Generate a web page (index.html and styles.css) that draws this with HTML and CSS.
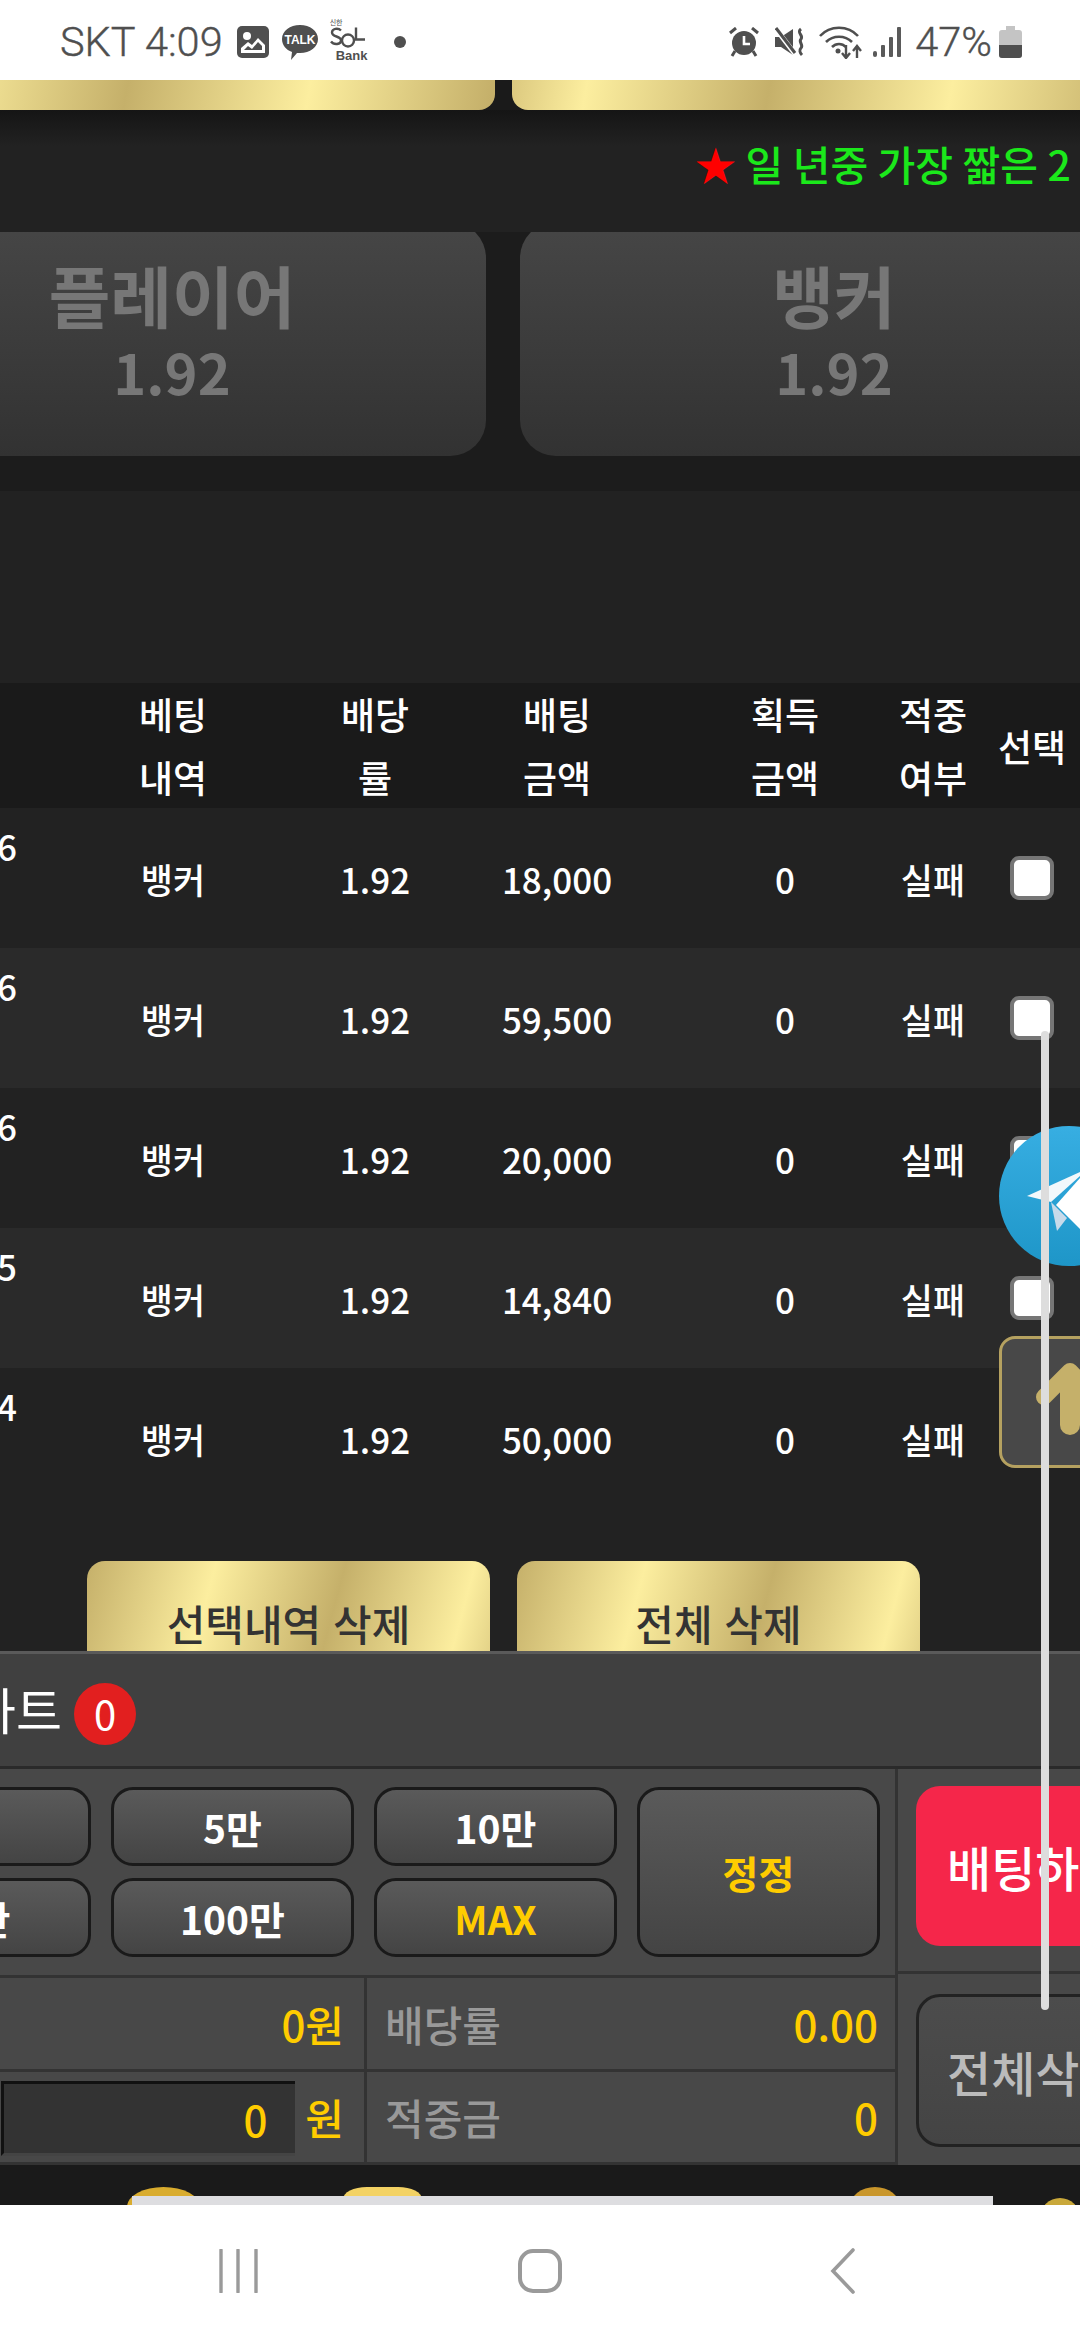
FILE: index.html
```html
<!DOCTYPE html>
<html lang="ko">
<head>
    <meta charset="UTF-8">
    <meta name="viewport" content="width=device-width, initial-scale=1.0">
    <title>배팅</title>
    <link rel="stylesheet" href="styles.css">
</head>
<body>
    <div class="status-bar">
        <span class="status-text">SKT 4:09</span>
        <svg class="ic-photo" width="32" height="32" viewBox="0 0 32 32"><rect width="32" height="32" rx="5" fill="#4f4f4f"/><circle cx="10" cy="10" r="4" fill="#fff"/><path d="M4 27v-5l7-6 4 3 6-7 7 7v8z" fill="#fff"/><path d="M7 24l4-4 4 3 6-7 4 4v4z" fill="#4f4f4f"/></svg>
        <svg class="ic-talk" width="36" height="36" viewBox="0 0 36 36"><path d="M18 1c10 0 18 6 18 14s-8 14-18 14h-3l-6 7 1-8C4 26 0 21 0 15 0 7 8 1 18 1z" fill="#4f4f4f"/><text x="18" y="20" class="talk-label">TALK</text></svg>
        <div class="sol">
            <span class="sol-top">신한</span>
            <svg width="36" height="23" viewBox="0 0 36 22"><path d="M11 3C8 0 2 1 2 5c0 5 9 3 9 8 0 4-7 5-10 1" fill="none" stroke="#4f4f4f" stroke-width="2.4"/><circle cx="18" cy="13" r="6" fill="none" stroke="#4f4f4f" stroke-width="2.4"/><path d="M26 0v12h9" fill="none" stroke="#4f4f4f" stroke-width="2.4"/></svg>
            <span class="sol-bank">Bank</span>
        </div>
        <span class="status-dot"></span>
        <span class="status-gap"></span>
        <svg class="ic-alarm" width="32" height="30" viewBox="0 0 32 30"><path d="M2 6l6-5M30 6l-6-5" stroke="#4f4f4f" stroke-width="3"/><circle cx="16" cy="16" r="12" fill="#4f4f4f"/><path d="M16 9v8h6" fill="none" stroke="#fff" stroke-width="2.6"/><path d="M7 24l-3 5M25 24l3 5" stroke="#4f4f4f" stroke-width="3"/></svg>
        <svg class="ic-mute" width="30" height="30" viewBox="0 0 30 30"><path d="M0 10h6l12-8v26L6 20H0z" fill="#4f4f4f"/><path d="M1 2l19 25" stroke="#fff" stroke-width="5"/><path d="M1 1l19 25" stroke="#4f4f4f" stroke-width="3"/><path d="M26 2c-5 4 3 6 0 10-3 3 3 6 0 9-2 2-1 5 1 7" fill="none" stroke="#4f4f4f" stroke-width="3"/></svg>
        <svg class="ic-wifi" width="44" height="34" viewBox="0 0 44 34"><g fill="none" stroke="#4f4f4f" stroke-width="2.6"><path d="M1 11C11 0 29 0 39 11"/><path d="M7 17c7-7 19-7 26 0"/><path d="M13 22c4-4 10-4 14 0"/></g><circle cx="19" cy="26" r="2.5" fill="#4f4f4f"/><path d="M27 20v12M23 28l4 5 4-5M38 33V22M34 26l4-5 4 5" fill="none" stroke="#4f4f4f" stroke-width="2.4"/></svg>
        <svg class="ic-signal" width="28" height="30" viewBox="0 0 28 30"><g fill="#5a5a5a"><rect x="0" y="24" width="4" height="6" rx="2"/><rect x="8" y="18" width="4" height="12" rx="1"/><rect x="16" y="10" width="4" height="20" rx="1"/><rect x="24" y="0" width="4" height="30" rx="1"/></g></svg>
        <span class="status-text status-pct">47%</span>
        <svg class="ic-battery" width="23" height="32" viewBox="0 0 23 32"><path d="M7 0h9v4h4a3 3 0 0 1 3 3v22a3 3 0 0 1-3 3H3a3 3 0 0 1-3-3V7a3 3 0 0 1 3-3h4z" fill="#c4c4c4"/><path d="M0 19h23v10a3 3 0 0 1-3 3H3a3 3 0 0 1-3-3z" fill="#4f4f4f"/></svg>
    </div>

    <div class="main">
        <div class="top-tabs">
            <div class="gold-tab"></div>
            <div class="gold-tab"></div>
        </div>
        <div class="ticker"><span class="star">★</span> 일 년중 가장 짧은 2</div>
        <div class="bet-area">
            <div class="bet-btn"><span class="bet-name">플레이어</span><span class="bet-odds">1.92</span></div>
            <div class="bet-btn"><span class="bet-name">뱅커</span><span class="bet-odds">1.92</span></div>
        </div>
        <div class="spacer"></div>

        <div class="row head">
            <div></div>
            <div>베팅<br>내역</div>
            <div>배당<br>률</div>
            <div>배팅<br>금액</div>
            <div>획득<br>금액</div>
            <div>적중<br>여부</div>
            <div class="head-check">선택</div>
        </div>
        <div class="row">
            <div class="date">6</div><div>뱅커</div><div>1.92</div><div>18,000</div><div>0</div><div>실패</div>
            <div><input class="check" type="checkbox"></div>
        </div>
        <div class="row alt">
            <div class="date">6</div><div>뱅커</div><div>1.92</div><div>59,500</div><div>0</div><div>실패</div>
            <div><input class="check" type="checkbox"></div>
        </div>
        <div class="row">
            <div class="date">6</div><div>뱅커</div><div>1.92</div><div>20,000</div><div>0</div><div>실패</div>
            <div><input class="check" type="checkbox"></div>
        </div>
        <div class="row alt">
            <div class="date">5</div><div>뱅커</div><div>1.92</div><div>14,840</div><div>0</div><div>실패</div>
            <div><input class="check" type="checkbox"></div>
        </div>
        <div class="row">
            <div class="date">4</div><div>뱅커</div><div>1.92</div><div>50,000</div><div>0</div><div>실패</div>
            <div></div>
        </div>

        <div class="delete-btns">
            <button class="delete-btn">선택내역 삭제</button>
            <button class="delete-btn">전체 삭제</button>
        </div>
    </div>

    <div class="cart">
        <div class="cart-head">
            <span class="cart-title">카트</span>
            <span class="cart-badge">0</span>
        </div>
        <div class="cart-body">
            <div class="cart-left">
                <div class="chips">
                    <button class="chip">1만</button>
                    <button class="chip">5만</button>
                    <button class="chip">10만</button>
                    <button class="chip chip-tall yellow">정정</button>
                    <button class="chip">50만</button>
                    <button class="chip">100만</button>
                    <button class="chip yellow">MAX</button>
                </div>
                <div class="info">
                    <div class="info-cell info-amount"><span class="yellow">0원</span></div>
                    <div class="info-cell"><span class="info-label">배당률</span><span class="yellow">0.00</span></div>
                    <div class="info-cell info-amount">
                        <input class="amount-input" type="text" value="0" readonly>
                        <span class="yellow">원</span>
                    </div>
                    <div class="info-cell"><span class="info-label">적중금</span><span class="yellow">0</span></div>
                </div>
            </div>
            <div class="cart-right">
                <div class="side-top"><button class="side-btn red">배팅하기</button></div>
                <div class="side-bottom"><button class="side-btn ghost">전체삭제</button></div>
            </div>
        </div>
    </div>

    <div class="footer-strip">
        <span class="blob blob-a"></span>
        <span class="blob blob-b"></span>
        <span class="blob blob-c"></span>
        <span class="blob blob-d"></span>
    </div>
    <div class="nav-bar">
        <svg width="42" height="44" viewBox="0 0 42 44"><path d="M3 1v42M20 1v42M38 1v42" stroke="#9a9a9a" stroke-width="3.4" stroke-linecap="round"/></svg>
        <svg width="46" height="46" viewBox="0 0 46 46"><rect x="3" y="3" width="40" height="40" rx="13" fill="none" stroke="#9a9a9a" stroke-width="4"/></svg>
        <svg width="26" height="46" viewBox="0 0 26 46"><path d="M23 2L3 23l20 21" fill="none" stroke="#9a9a9a" stroke-width="3.6" stroke-linecap="round"/></svg>
    </div>

    <!-- floating stuff -->
    <div class="float-telegram">
        <svg width="140" height="140" viewBox="0 0 140 140">
            <defs><linearGradient id="tg" x1="0" y1="0" x2="0" y2="1"><stop offset="0" stop-color="#37aee2"/><stop offset="1" stop-color="#1e96c8"/></linearGradient></defs>
            <circle cx="70" cy="70" r="70" fill="url(#tg)"/>
            <path d="M28 70L90 42 52 76z" fill="#f2f8fb"/>
            <path d="M52 76l6 29 10-13z" fill="#c8daea"/>
            <path d="M57 79l33-37v70z" fill="#fff"/>
        </svg>
    </div>
    <div class="float-up">
        <svg width="78" height="78" viewBox="0 0 78 78"><path d="M8 34L34 8l26 26" fill="none" stroke="#c5b06a" stroke-width="16" stroke-linecap="round" stroke-linejoin="round"/><path d="M34 12v50" fill="none" stroke="#c5b06a" stroke-width="20" stroke-linecap="round"/></svg>
    </div>
    <div class="scroll-thumb"></div>
    <div class="bottom-thumb"></div>
</body>
</html>
```

FILE: styles.css
```css
* {
    box-sizing: border-box;
}
body {
    margin: 0;
    width: 1080px;
    height: 2340px;
    overflow: hidden;
    position: relative;
    display: flex;
    flex-direction: column;
    background-color: #222;
    color: #fff;
    font-family: "Noto Sans CJK KR", "Noto Sans", sans-serif;
}
button {
    font-family: inherit;
    cursor: pointer;
    padding: 0;
}
.yellow {
    color: #ffcc00;
}

/* status bar */
.status-bar {
    height: 80px;
    flex: none;
    background-color: #fff;
    display: flex;
    align-items: center;
    padding: 4px 58px 0 60px;
    color: #4f4f4f;
}
.status-text {
    font-family: Roboto, sans-serif;
    font-size: 41.5px;
    font-weight: 300;
    -webkit-text-stroke: 0.4px #4f4f4f;
    line-height: 1;
}
.ic-photo {
    margin-left: 14px;
}
.ic-talk {
    margin-left: 13px;
}
.talk-label {
    font-family: "Liberation Sans", sans-serif;
    font-size: 12px;
    font-weight: 700;
    fill: #fff;
    text-anchor: middle;
}
.sol {
    width: 40px;
    height: 46px;
    margin-left: 12px;
    margin-top: -2px;
    display: flex;
    flex-direction: column;
    color: #4f4f4f;
}
.sol-top {
    font-size: 7px;
    line-height: 9px;
}
.sol-bank {
    font-family: "Liberation Sans", sans-serif;
    font-size: 13px;
    font-weight: 700;
    line-height: 11px;
    margin-left: 6px;
}
.status-dot {
    width: 12px;
    height: 12px;
    border-radius: 50%;
    background-color: #4f4f4f;
    margin-left: 24px;
}
.status-gap {
    flex: 1;
}
.ic-mute {
    margin-left: 15px;
}
.ic-wifi {
    margin-left: 14px;
}
.ic-signal {
    margin-left: 10px;
}
.status-pct {
    margin-left: 14px;
}
.ic-battery {
    margin-left: 7px;
}

/* scrolled page */
.main {
    height: 1571px;
    flex: none;
    overflow: hidden;
}
.top-tabs {
    height: 30px;
    display: flex;
    gap: 17px;
    margin-left: -130px;
    background-color: #1a1a1a;
}
.gold-tab {
    width: 625px;
    flex: none;
    border-radius: 0 0 16px 16px;
    background: linear-gradient(100deg, #dcc97f 0, #fcee9f 12%, #c5b06a 41%, #fcee9f 70%, #c5b06a 99%);
}
.ticker {
    height: 122px;
    position: relative;
    z-index: 1;
    padding: 24px 0 0 695px;
    white-space: nowrap;
    overflow: hidden;
    font-size: 41px;
    font-weight: 500;
    line-height: 58px;
    word-spacing: -2px;
    color: #1be81b;
    background: linear-gradient(#151515, #222 30%);
}
.star {
    color: #f00;
}
.bet-area {
    height: 259px;
    display: flex;
    gap: 34px;
    margin-left: -142px;
    background-color: #1c1c1c;
}
.bet-btn {
    width: 628px;
    height: 234px;
    flex: none;
    margin-top: -10px;
    padding-top: 28px;
    border-radius: 36px;
    background: linear-gradient(#464646, #323232);
    display: flex;
    flex-direction: column;
    align-items: center;
    color: #777;
    font-weight: 700;
}
.bet-name {
    font-size: 67px;
    line-height: 88px;
}
.bet-odds {
    font-size: 56px;
    line-height: 66px;
}
.spacer {
    height: 192px;
}

/* history table */
.row {
    height: 140px;
    display: grid;
    grid-template-columns: 17px 312px 92px 272px 184px 112px 86px 5px;
    align-items: center;
    justify-items: center;
    background-color: #222;
    font-size: 35px;
    font-weight: 500;
}
.row.alt {
    background-color: #2a2a2a;
}
.row.head {
    height: 125px;
    background-color: #1a1a1a;
    font-size: 37px;
    line-height: 63px;
    text-align: center;
}
.date {
    justify-self: end;
    align-self: start;
    padding-top: 16px;
    line-height: 44px;
}
.check {
    appearance: none;
    display: block;
    width: 44px;
    height: 44px;
    margin: 0;
    background-color: #fff;
    border: 4px solid #767676;
    border-radius: 9px;
}
.delete-btns {
    display: flex;
    gap: 27px;
    padding: 53px 0 0 87px;
}
.delete-btn {
    width: 403px;
    height: 110px;
    flex: none;
    border: none;
    border-radius: 18px;
    padding-top: 14px;
    font-size: 42px;
    font-weight: 500;
    line-height: 56px;
    color: #333;
    background: linear-gradient(105deg, #c5b06a 0, #fcee9f 30%, #c5b06a 60%, #fcee9f 90%, #e0cf85 100%);
}

/* betting cart */
.cart {
    height: 514px;
    flex: none;
    border-top: 3px solid #5a5a5a;
    background-color: #484848;
    display: flex;
    flex-direction: column;
}
.cart-head {
    height: 115px;
    flex: none;
    display: flex;
    align-items: center;
    gap: 12px;
    margin-left: -30px;
    padding-top: 8px;
    background-color: #404040;
    border-bottom: 3px solid #2a2a2a;
}
.cart-title {
    font-size: 50px;
    line-height: 1;
    margin-bottom: 12px;
}
.cart-badge {
    width: 62px;
    height: 62px;
    border-radius: 50%;
    background-color: #e21f1f;
    font-size: 40px;
    line-height: 60px;
    text-align: center;
}
.cart-body {
    flex: 1;
    display: flex;
}
.cart-left {
    width: 898px;
    flex: none;
    border-right: 3px solid #333;
    display: flex;
    flex-direction: column;
}
.chips {
    height: 209px;
    flex: none;
    display: grid;
    grid-template-columns: repeat(4, 243px);
    grid-template-rows: 79px 79px;
    gap: 12px 20px;
    padding-top: 18px;
    margin-left: -152px;
    width: 1050px;
    border-bottom: 3px solid #333;
}
.chip {
    border: 3px solid #1a1a1a;
    border-radius: 22px;
    background: linear-gradient(#5a5a5a, #444);
    color: #fff;
    font-size: 39px;
    font-weight: 700;
}
.chip.yellow {
    color: #ffcc00;
}
.chip-tall {
    grid-column: 4;
    grid-row: 1 / span 2;
}
.info {
    flex: 1;
    display: grid;
    grid-template-columns: 367px 1fr;
    grid-template-rows: 1fr 1fr;
}
.info-cell {
    display: flex;
    align-items: center;
    justify-content: space-between;
    padding: 0 17px 0 18px;
    font-size: 42px;
    font-weight: 500;
    border-bottom: 3px solid #333;
}
.info-cell.info-amount {
    justify-content: flex-end;
    padding: 0 20px 0 0;
    border-right: 3px solid #333;
}
.info-label {
    color: #999;
}
.amount-input {
    width: 294px;
    height: 75px;
    flex: none;
    margin: 3px 10px 0 0;
    padding: 0 28px 0 0;
    border: none;
    border-top: 3px solid #111;
    border-left: 3px solid #111;
    border-bottom: 3px solid #444;
    background-color: #333;
    color: #ffcc00;
    font-family: inherit;
    font-size: 42px;
    font-weight: 500;
    text-align: right;
}
.cart-right {
    flex: 1;
    min-width: 0;
    overflow: hidden;
    display: flex;
    flex-direction: column;
}
.side-top {
    height: 205px;
    flex: none;
    padding: 17px 0 0 18px;
    border-bottom: 3px solid #333;
}
.side-bottom {
    flex: 1;
    padding: 20px 0 0 18px;
}
.side-btn {
    display: block;
    width: 240px;
    padding-left: 31px;
    text-align: left;
    white-space: nowrap;
    font-size: 48px;
    font-weight: 500;
    border-radius: 24px;
}
.side-btn.red {
    height: 160px;
    border: none;
    background-color: #f5264a;
    color: #fff;
}
.side-btn.ghost {
    height: 153px;
    border: 3px solid #222;
    background: linear-gradient(#4c4c4c, #444);
    color: #bbb;
    padding-left: 28px;
}

/* bottom of the page, mostly hidden */
.footer-strip {
    height: 40px;
    flex: none;
    overflow: hidden;
    display: flex;
    background-color: #1a1a1a;
    padding: 22px 0 0 127px;
}
.blob {
    height: 40px;
    flex: none;
    border-radius: 50%;
    background-color: #d9ac2e;
}
.blob-a {
    width: 73px;
}
.blob-b {
    width: 79px;
    margin-left: 143px;
    background-color: #f3d264;
    border-radius: 30% 30% 0 0;
}
.blob-c {
    width: 50px;
    margin-left: 428px;
    background-color: #c9962b;
}
.blob-d {
    width: 40px;
    margin: 11px 0 0 140px;
    background-color: #c9a83a;
}
.nav-bar {
    flex: 1;
    background-color: #fff;
    display: flex;
    align-items: center;
    padding: 0 0 3px 218px;
}
.nav-bar svg:nth-child(2) {
    margin-left: 257px;
}
.nav-bar svg:nth-child(3) {
    margin-left: 267px;
}

/* things floating over the page */
.float-telegram {
    position: absolute;
    left: 999px;
    top: 1126px;
    width: 140px;
    height: 140px;
}
.float-up {
    position: absolute;
    left: 999px;
    top: 1336px;
    width: 130px;
    height: 132px;
    border: 3px solid #b5a160;
    border-radius: 16px;
    background-color: #484848;
    padding: 24px 0 0 34px;
}
.float-up svg {
    display: block;
}
.scroll-thumb {
    position: absolute;
    left: 1041px;
    top: 1031px;
    width: 8px;
    height: 979px;
    border-radius: 4px;
    background-color: #ddd;
}
.bottom-thumb {
    position: absolute;
    left: 132px;
    top: 2196px;
    width: 861px;
    height: 9px;
    background-color: #dddde0;
}
```
